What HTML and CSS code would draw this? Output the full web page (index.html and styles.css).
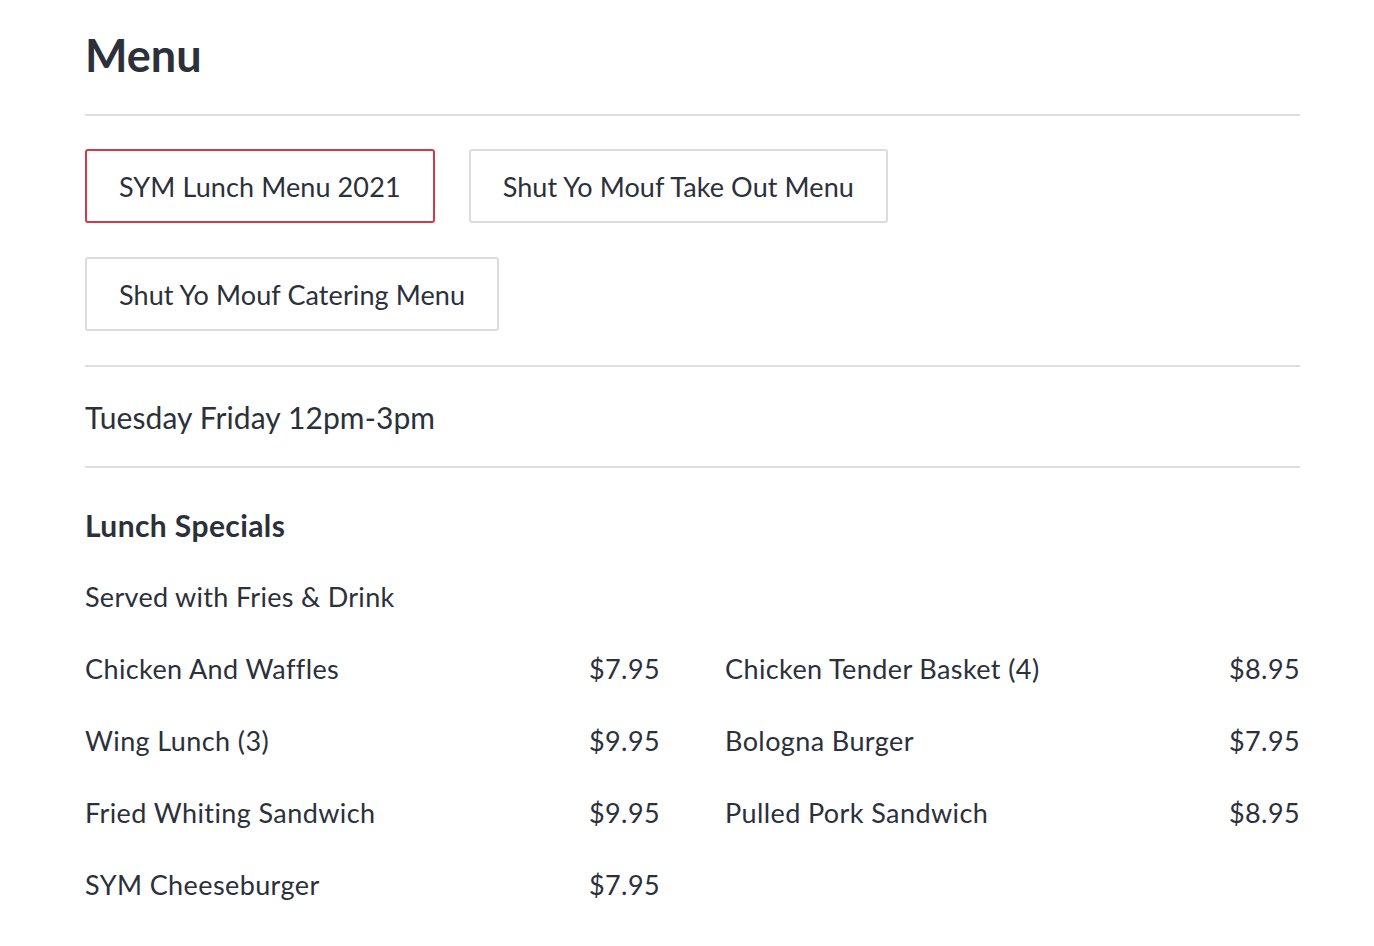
FILE: index.html
```html
<!DOCTYPE html>
<html>
<head>
<meta charset="utf-8">
<link rel="stylesheet" href="styles.css">
</head>
<body>
<main class="menu">
  <h1 class="title">Menu</h1>
  <hr class="rule">
  <nav class="tabs">
    <button class="tab active">SYM Lunch Menu 2021</button>
    <button class="tab">Shut Yo Mouf Take Out Menu</button>
    <button class="tab">Shut Yo Mouf Catering Menu</button>
  </nav>
  <hr class="rule">
  <p class="hours">Tuesday Friday 12pm-3pm</p>
  <hr class="rule">
  <section class="section">
    <h2 class="section-title">Lunch Specials</h2>
    <p class="section-desc">Served with Fries &amp; Drink</p>
    <div class="items">
      <div class="item"><span class="name">Chicken And Waffles</span><span class="price">$7.95</span></div>
      <div class="item"><span class="name">Chicken Tender Basket (4)</span><span class="price">$8.95</span></div>
      <div class="item"><span class="name">Wing Lunch (3)</span><span class="price">$9.95</span></div>
      <div class="item"><span class="name">Bologna Burger</span><span class="price">$7.95</span></div>
      <div class="item"><span class="name">Fried Whiting Sandwich</span><span class="price">$9.95</span></div>
      <div class="item"><span class="name">Pulled Pork Sandwich</span><span class="price">$8.95</span></div>
      <div class="item"><span class="name">SYM Cheeseburger</span><span class="price">$7.95</span></div>
    </div>
  </section>
</main>
</body>
</html>
```

FILE: styles.css
```css
html, body {
  margin: 0;
  padding: 0;
  background: #fff;
}
body {
  font-family: Lato, "Open Sans", sans-serif;
  color: #2b303b;
}
.menu {
  width: 1215px;
  margin: 0 0 0 85px;
  padding-top: 26px;
}
.title {
  margin: 0 0 30px;
  font-size: 45px;
  font-weight: 700;
  line-height: 58px;
}
.rule {
  border: 0;
  border-top: 2px solid #dedede;
  margin: 0;
}
.tabs {
  display: flex;
  flex-wrap: wrap;
  gap: 34px;
  padding: 33px 0 34px;
  width: 900px;
}
.tab {
  font-family: inherit;
  color: #2b303b;
  font-size: 27px;
  letter-spacing: 0.1px;
  height: 74px;
  padding: 0 32px;
  background: #fff;
  border: 2px solid #dcdcdc;
  border-radius: 3px;
}
.tab.active {
  border-color: #d3394a;
}
.hours {
  margin: 0;
  padding: 30px 0 29px;
  font-size: 30px;
  letter-spacing: 0.1px;
  line-height: 40px;
  font-weight: 400;
}
.section {
  padding-top: 37px;
}
.section-title {
  margin: 0;
  font-size: 30px;
  letter-spacing: 0.4px;
  font-weight: 700;
  line-height: 40px;
}
.section-desc {
  margin: 36px 0 0;
  font-size: 27px;
  letter-spacing: 0.3px;
  line-height: 32px;
}
.items {
  display: grid;
  grid-template-columns: 1fr 1fr;
  column-gap: 65px;
  row-gap: 40px;
  margin-top: 40px;
}
.item {
  display: flex;
  justify-content: space-between;
  font-size: 27px;
  letter-spacing: 0.4px;
  line-height: 32px;
}
```
